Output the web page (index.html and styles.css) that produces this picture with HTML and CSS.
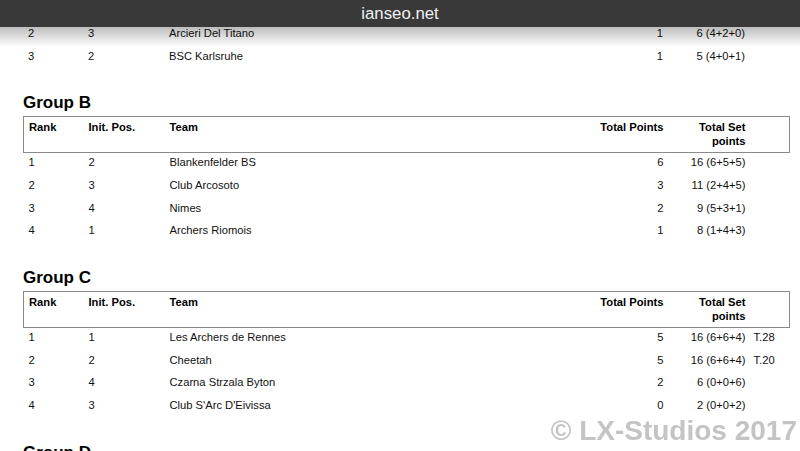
FILE: index.html
```html
<!DOCTYPE html>
<html lang="en">
<head>
<meta charset="utf-8">
<title>ianseo.net</title>
<link rel="stylesheet" href="styles.css">
</head>
<body>
<header class="topbar">ianseo.net</header>
<div class="topshade"></div>
<main class="page">
  <section class="group group-first">
    <table class="standings">
      <colgroup><col class="c-rank"><col class="c-init"><col class="c-team"><col class="c-pts"><col class="c-set"><col class="c-tie"></colgroup>
      <tbody>
        <tr><td>2</td><td>3</td><td>Arcieri Del Titano</td><td class="num">1</td><td class="num">6 (4+2+0)</td><td></td></tr>
        <tr><td>3</td><td>2</td><td>BSC Karlsruhe</td><td class="num">1</td><td class="num">5 (4+0+1)</td><td></td></tr>
      </tbody>
    </table>
  </section>

  <section class="group">
    <h2 class="group-title">Group B</h2>
    <table class="standings">
      <colgroup><col class="c-rank"><col class="c-init"><col class="c-team"><col class="c-pts"><col class="c-set"><col class="c-tie"></colgroup>
      <thead>
        <tr><th>Rank</th><th>Init. Pos.</th><th>Team</th><th class="num">Total Points</th><th class="num">Total Set points</th><th></th></tr>
      </thead>
      <tbody>
        <tr><td>1</td><td>2</td><td>Blankenfelder BS</td><td class="num">6</td><td class="num">16 (6+5+5)</td><td></td></tr>
        <tr><td>2</td><td>3</td><td>Club Arcosoto</td><td class="num">3</td><td class="num">11 (2+4+5)</td><td></td></tr>
        <tr><td>3</td><td>4</td><td>Nimes</td><td class="num">2</td><td class="num">9 (5+3+1)</td><td></td></tr>
        <tr><td>4</td><td>1</td><td>Archers Riomois</td><td class="num">1</td><td class="num">8 (1+4+3)</td><td></td></tr>
      </tbody>
    </table>
  </section>

  <section class="group">
    <h2 class="group-title">Group C</h2>
    <table class="standings">
      <colgroup><col class="c-rank"><col class="c-init"><col class="c-team"><col class="c-pts"><col class="c-set"><col class="c-tie"></colgroup>
      <thead>
        <tr><th>Rank</th><th>Init. Pos.</th><th>Team</th><th class="num">Total Points</th><th class="num">Total Set points</th><th></th></tr>
      </thead>
      <tbody>
        <tr><td>1</td><td>1</td><td>Les Archers de Rennes</td><td class="num">5</td><td class="num">16 (6+6+4)</td><td class="tie">T.28</td></tr>
        <tr><td>2</td><td>2</td><td>Cheetah</td><td class="num">5</td><td class="num">16 (6+6+4)</td><td class="tie">T.20</td></tr>
        <tr><td>3</td><td>4</td><td>Czarna Strzala Byton</td><td class="num">2</td><td class="num">6 (0+0+6)</td><td></td></tr>
        <tr><td>4</td><td>3</td><td>Club S'Arc D'Eivissa</td><td class="num">0</td><td class="num">2 (0+0+2)</td><td></td></tr>
      </tbody>
    </table>
  </section>

  <section class="group">
    <h2 class="group-title">Group D</h2>
  </section>
</main>
<div class="watermark">© LX-Studios 2017</div>
</body>
</html>
```

FILE: styles.css
```css
html, body {
  margin: 0;
  padding: 0;
  background: #ffffff;
}

body {
  font-family: "Liberation Sans", Arial, Helvetica, sans-serif;
  font-size: 11.2px;
  color: #111111;
  overflow: hidden;
}

.topbar {
  position: fixed;
  top: 0;
  left: 0;
  right: 0;
  height: 27px;
  background: #393939;
  color: #f0f0f0;
  font-size: 16.8px;
  line-height: 27px;
  text-align: center;
  z-index: 3;
}

.topshade {
  position: fixed;
  top: 27px;
  left: 0;
  right: 0;
  height: 20px;
  background: linear-gradient(to bottom, rgba(0, 0, 0, 0.26), rgba(0, 0, 0, 0));
  pointer-events: none;
  z-index: 2;
}

.page {
  padding: 24px 11px 0 23px;
}

.group {
  margin-top: 24px;
}

.group-first {
  margin-top: 0;
}

.group-title {
  margin: 0 0 3px;
  font-size: 17px;
  line-height: 20px;
  font-weight: bold;
  color: #000000;
}

.standings {
  width: 766px;
  table-layout: fixed;
  border-collapse: collapse;
  border-spacing: 0;
}

.c-rank { width: 60px; }
.c-init { width: 81px; }
.c-team { width: 414px; }
.c-pts  { width: 90px; }
.c-set  { width: 82px; }
.c-tie  { width: 39px; }

.standings thead tr {
  border: 1px solid #8a8a8a;
}

.standings th {
  padding: 3px 5px 4px;
  line-height: 14px;
  font-weight: bold;
  text-align: left;
  vertical-align: top;
  color: #000000;
}

.standings td {
  padding: 2px 5px 6.67px;
  line-height: 14px;
  text-align: left;
  vertical-align: top;
  white-space: nowrap;
}

.standings .num {
  text-align: right;
}

.standings .tie {
  padding-left: 3px;
  padding-right: 0;
}

.watermark {
  position: fixed;
  right: 3px;
  bottom: 6px;
  font-size: 28px;
  line-height: 1;
  font-weight: bold;
  color: #c4c4c4;
  z-index: 4;
  white-space: nowrap;
}
```
